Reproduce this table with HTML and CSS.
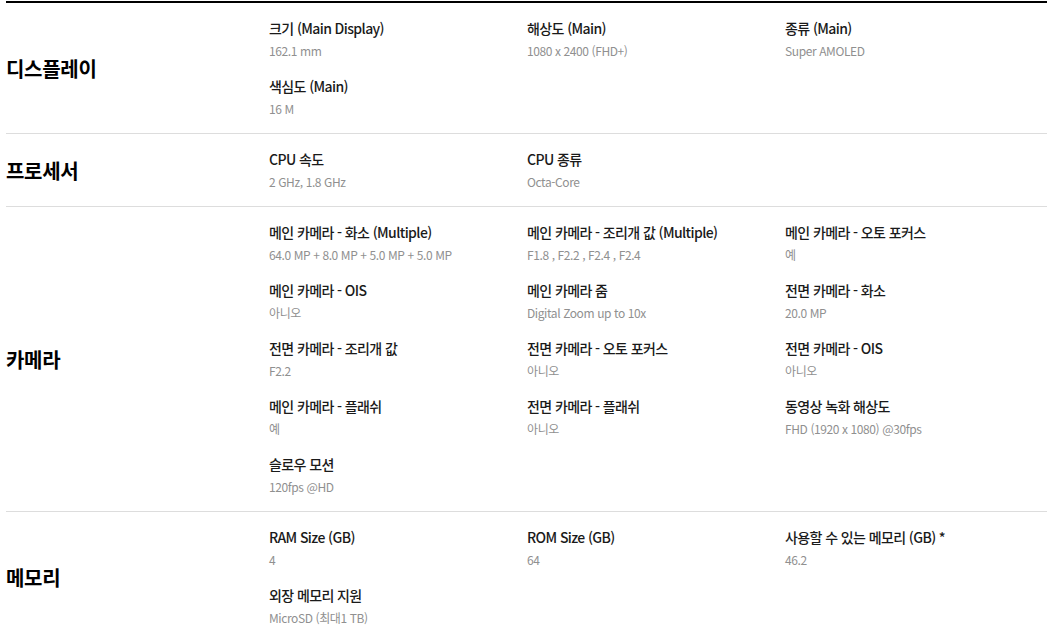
FILE: index.html
```html
<!DOCTYPE html>
<html lang="ko">
<head>
    <meta charset="UTF-8">
    <meta name="viewport" content="width=device-width, initial-scale=1.0">
    <title>사양</title>
    <link rel="stylesheet" href="styles.css">
</head>
<body>
    <div class="spec-table">
        <div class="spec-section">
            <h2 class="spec-title">디스플레이</h2>
            <div class="spec-items">
                <div class="spec-item"><p class="spec-label">크기 (Main Display)</p><p class="spec-value">162.1 mm</p></div>
                <div class="spec-item"><p class="spec-label">해상도 (Main)</p><p class="spec-value">1080 x 2400 (FHD+)</p></div>
                <div class="spec-item"><p class="spec-label">종류 (Main)</p><p class="spec-value">Super AMOLED</p></div>
                <div class="spec-item"><p class="spec-label">색심도 (Main)</p><p class="spec-value">16 M</p></div>
            </div>
        </div>

        <div class="spec-section">
            <h2 class="spec-title">프로세서</h2>
            <div class="spec-items">
                <div class="spec-item"><p class="spec-label">CPU 속도</p><p class="spec-value">2 GHz, 1.8 GHz</p></div>
                <div class="spec-item"><p class="spec-label">CPU 종류</p><p class="spec-value">Octa-Core</p></div>
            </div>
        </div>

        <div class="spec-section">
            <h2 class="spec-title">카메라</h2>
            <div class="spec-items">
                <div class="spec-item"><p class="spec-label">메인 카메라 - 화소 (Multiple)</p><p class="spec-value">64.0 MP + 8.0 MP + 5.0 MP + 5.0 MP</p></div>
                <div class="spec-item"><p class="spec-label">메인 카메라 - 조리개 값 (Multiple)</p><p class="spec-value">F1.8 , F2.2 , F2.4 , F2.4</p></div>
                <div class="spec-item"><p class="spec-label">메인 카메라 - 오토 포커스</p><p class="spec-value">예</p></div>
                <div class="spec-item"><p class="spec-label">메인 카메라 - OIS</p><p class="spec-value">아니오</p></div>
                <div class="spec-item"><p class="spec-label">메인 카메라 줌</p><p class="spec-value">Digital Zoom up to 10x</p></div>
                <div class="spec-item"><p class="spec-label">전면 카메라 - 화소</p><p class="spec-value">20.0 MP</p></div>
                <div class="spec-item"><p class="spec-label">전면 카메라 - 조리개 값</p><p class="spec-value">F2.2</p></div>
                <div class="spec-item"><p class="spec-label">전면 카메라 - 오토 포커스</p><p class="spec-value">아니오</p></div>
                <div class="spec-item"><p class="spec-label">전면 카메라 - OIS</p><p class="spec-value">아니오</p></div>
                <div class="spec-item"><p class="spec-label">메인 카메라 - 플래쉬</p><p class="spec-value">예</p></div>
                <div class="spec-item"><p class="spec-label">전면 카메라 - 플래쉬</p><p class="spec-value">아니오</p></div>
                <div class="spec-item"><p class="spec-label">동영상 녹화 해상도</p><p class="spec-value">FHD (1920 x 1080) @30fps</p></div>
                <div class="spec-item"><p class="spec-label">슬로우 모션</p><p class="spec-value">120fps @HD</p></div>
            </div>
        </div>

        <div class="spec-section">
            <h2 class="spec-title">메모리</h2>
            <div class="spec-items">
                <div class="spec-item"><p class="spec-label">RAM Size (GB)</p><p class="spec-value">4</p></div>
                <div class="spec-item"><p class="spec-label">ROM Size (GB)</p><p class="spec-value">64</p></div>
                <div class="spec-item"><p class="spec-label">사용할 수 있는 메모리 (GB) *</p><p class="spec-value">46.2</p></div>
                <div class="spec-item"><p class="spec-label">외장 메모리 지원</p><p class="spec-value">MicroSD (최대1 TB)</p></div>
            </div>
        </div>
    </div>
</body>
</html>
```

FILE: styles.css
```css
* {
    margin: 0;
    padding: 0;
    box-sizing: border-box;
}

body {
    font-family: "Noto Sans CJK KR", "Noto Sans", sans-serif;
    background: #fff;
    color: #000;
    padding: 1px 2px 0 6px;
}

.spec-table {
    border-top: 2px solid #000;
}

.spec-section {
    display: flex;
    align-items: center;
    padding: 15px 0 14px;
    border-bottom: 1px solid #ddd;
}

.spec-title {
    width: 263px;
    flex-shrink: 0;
    font-size: 20px;
    font-weight: 700;
    letter-spacing: -0.3px;
}

.spec-items {
    flex: 1;
    display: grid;
    grid-template-columns: repeat(3, 258px);
    row-gap: 15px;
}

.spec-label {
    font-size: 14px;
    line-height: 20px;
    font-weight: 500;
    color: #1a1a1a;
    letter-spacing: -0.6px;
}

.spec-value {
    margin-top: 3px;
    font-size: 12px;
    line-height: 20px;
    color: #909090;
    letter-spacing: -0.4px;
}
```
